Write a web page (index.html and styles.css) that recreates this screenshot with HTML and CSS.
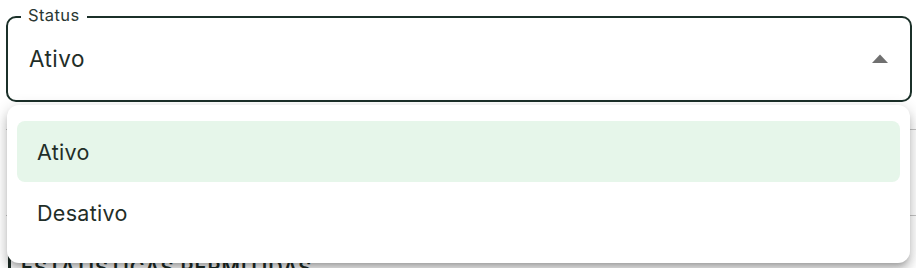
FILE: index.html
```html
<!DOCTYPE html>
<html lang="pt">
<head>
<meta charset="utf-8">
<title>Status</title>
<link rel="stylesheet" href="styles.css">
</head>
<body>
<div class="page">
  <div class="select-wrap">
    <div class="field">
      <span class="label">Status</span>
      <span class="value">Ativo</span>
      <svg class="arrow" width="16" height="9" viewBox="0 0 16 9"><polygon points="0,9 8,0.5 16,9" fill="#707070"/></svg>
    </div>
    <div class="menu">
      <div class="item selected">Ativo</div>
      <div class="item">Desativo</div>
    </div>
  </div>
  <div class="behind">
    <div class="divider first"></div>
    <div class="divider second"></div>
    <h2 class="section-title">Estatísticas permitidas</h2>
  </div>
</div>
</body>
</html>
```
FILE: styles.css
```css
html, body {
  margin: 0;
  padding: 0;
  background: #ffffff;
}
body {
  font-family: Inter, "Noto Sans", "Liberation Sans", sans-serif;
  color: #1f2e28;
  overflow: hidden;
}
.page {
  padding: 16px 4px 0 6px;
}
.select-wrap {
  position: relative;
}
.field {
  position: relative;
  box-sizing: border-box;
  height: 86px;
  border: 2.5px solid #1b3029;
  border-radius: 10px;
  display: flex;
  align-items: center;
  justify-content: space-between;
  padding: 0 22px 0 21px;
  background: #ffffff;
}
.label {
  position: absolute;
  top: -12px;
  left: 13px;
  padding: 0 7px;
  background: #ffffff;
  font-size: 16.5px;
  line-height: 18px;
  letter-spacing: 0.4px;
  color: #2a3833;
}
.value {
  font-size: 22.5px;
  line-height: 26px;
  letter-spacing: 0.45px;
  color: #1f2e28;
}
.arrow {
  display: block;
  margin-bottom: 1px;
}
.menu {
  position: absolute;
  z-index: 10;
  top: calc(100% + 3px);
  left: 1px;
  width: 903px;
  box-sizing: border-box;
  height: 158px;
  padding: 16px 10px 20px;
  background: #ffffff;
  border-radius: 12px;
  box-shadow: 0 5px 5px -3px rgba(0,0,0,0.2), 0 8px 10px 1px rgba(0,0,0,0.14), 0 3px 14px 2px rgba(0,0,0,0.12);
}
.item {
  height: 61px;
  display: flex;
  align-items: center;
  padding-left: 20px;
  font-size: 21.5px;
  letter-spacing: 0.3px;
  border-radius: 8px;
  color: #1f2e28;
}
.item.selected {
  background: #e6f6ea;
}
.behind {
  display: flex;
  flex-direction: column;
}
.divider {
  height: 1px;
  background: #c4c4c4;
  margin-right: -4px;
}
.divider.first {
  margin-top: 27px;
}
.divider.second {
  margin-top: 85px;
}
.section-title {
  margin: 40px 0 0 2px;
  padding-left: 10px;
  border-left: 3px solid #1f2e28;
  font-size: 20px;
  line-height: 24px;
  font-weight: 600;
  text-transform: uppercase;
  letter-spacing: 1px;
  color: #1f2e28;
}
```
